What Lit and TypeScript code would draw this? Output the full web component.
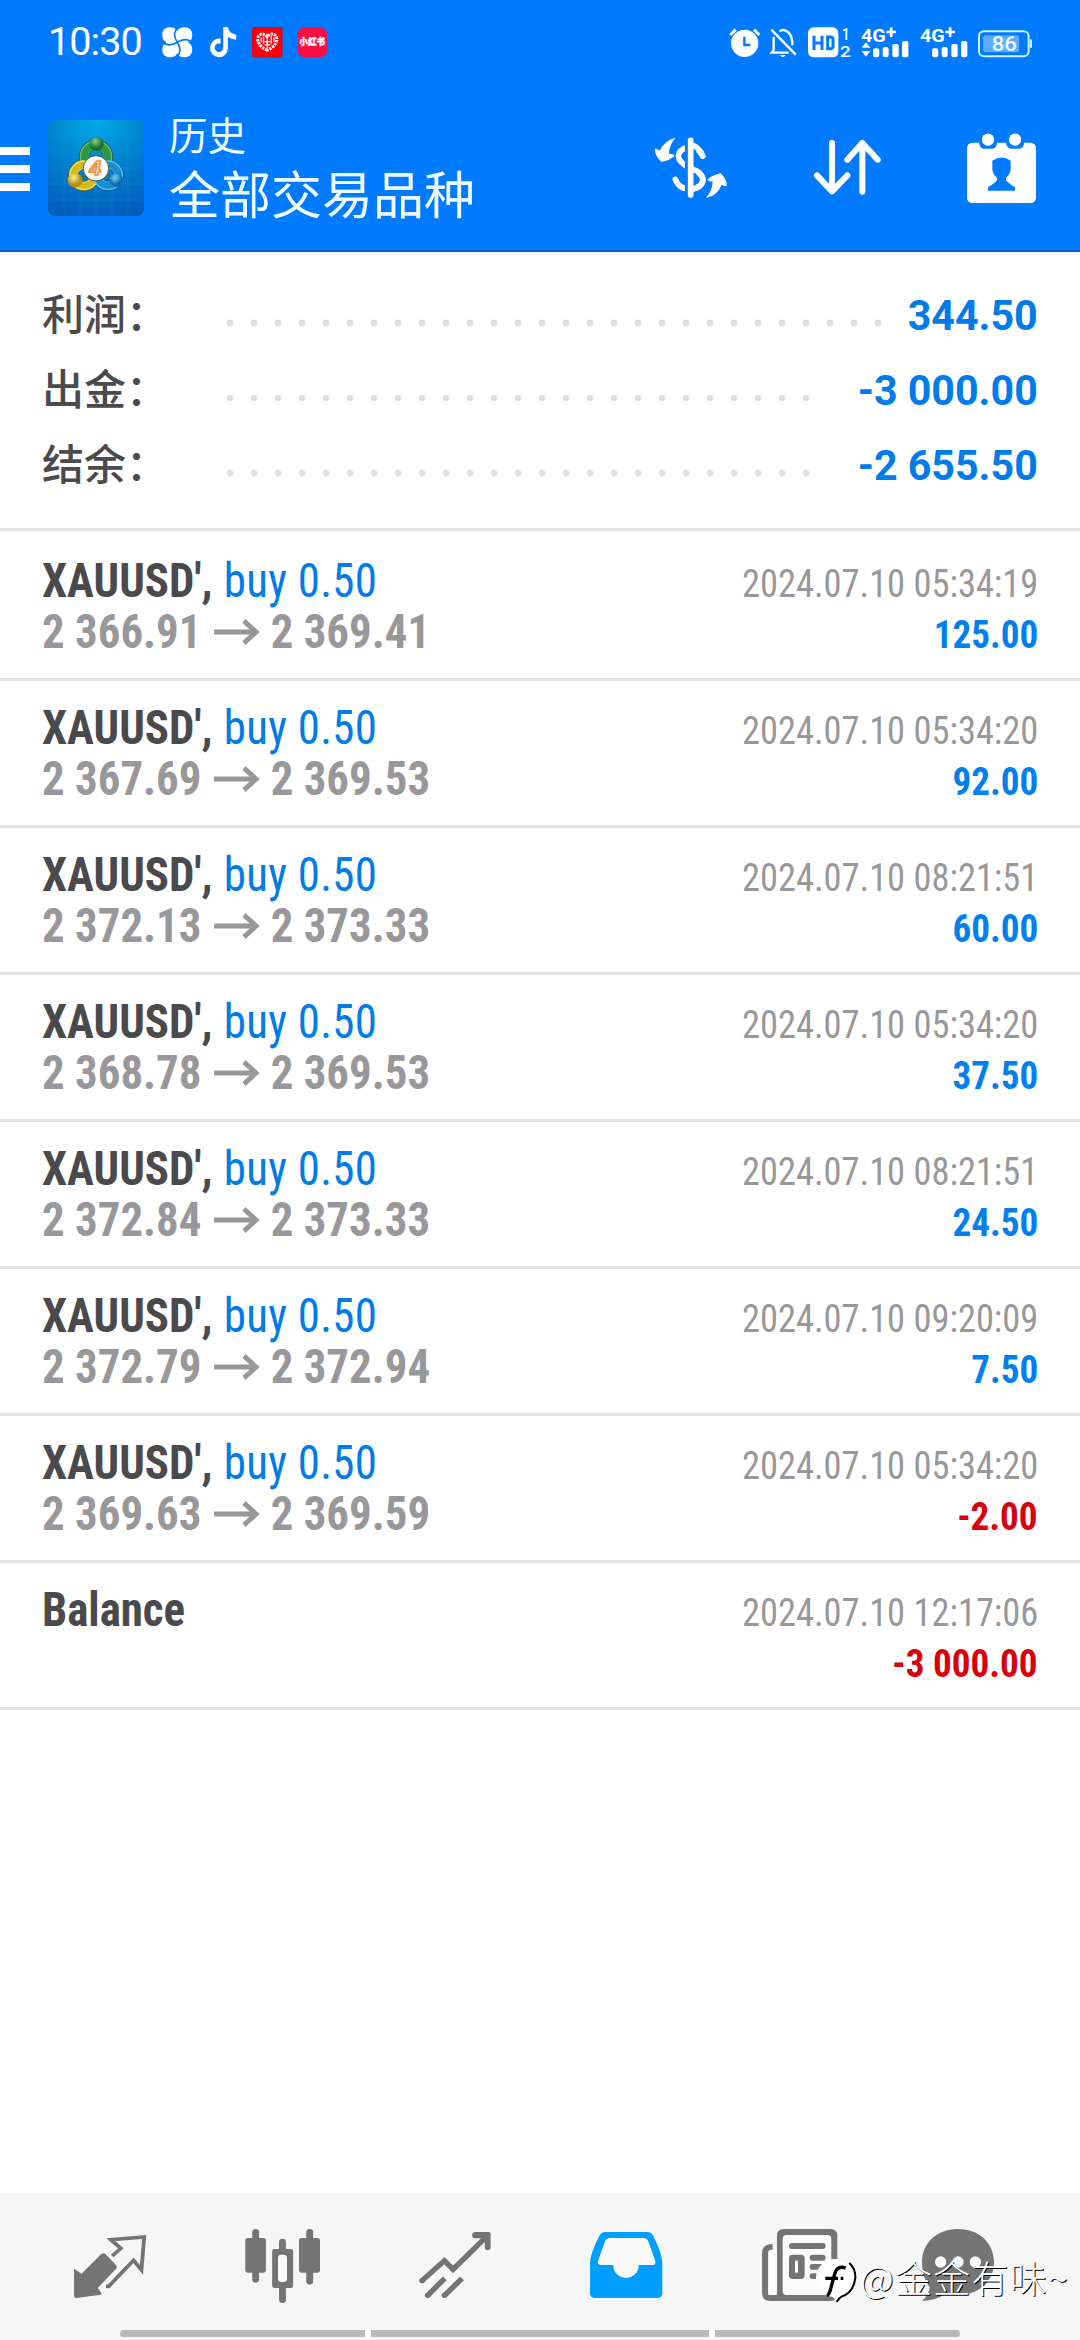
import { LitElement, html, css, svg } from "lit";
import { customElement, property } from "lit/decorators.js";

interface Deal {
  from: string;
  to: string;
  time: string;
  profit: string;
}

const DEALS: Deal[] = [
  { from: "2 366.91", to: "2 369.41", time: "2024.07.10 05:34:19", profit: "125.00" },
  { from: "2 367.69", to: "2 369.53", time: "2024.07.10 05:34:20", profit: "92.00" },
  { from: "2 372.13", to: "2 373.33", time: "2024.07.10 08:21:51", profit: "60.00" },
  { from: "2 368.78", to: "2 369.53", time: "2024.07.10 05:34:20", profit: "37.50" },
  { from: "2 372.84", to: "2 373.33", time: "2024.07.10 08:21:51", profit: "24.50" },
  { from: "2 372.79", to: "2 372.94", time: "2024.07.10 09:20:09", profit: "7.50" },
  { from: "2 369.63", to: "2 369.59", time: "2024.07.10 05:34:20", profit: "-2.00" },
];

const SUMMARY = [
  { label: "利润：", value: "344.50", dots: 28 },
  { label: "出金：", value: "-3 000.00", dots: 25 },
  { label: "结余：", value: "-2 655.50", dots: 25 },
];

/* Builds an icon of w by h pixels from a viewBox and its shapes. */
const icon = (w: number, h: number, viewBox: string, body: unknown) =>
  html`<svg class="icon" width=${w} height=${h} viewBox=${viewBox} preserveAspectRatio="none">${body}</svg>`;

@customElement("status-bar")
class StatusBar extends LitElement {
  static styles = css`
    :host { display: flex; align-items: flex-end; height: 57px; padding: 0 47.5px 0 48px; margin-bottom: 27px; color: #fff; }
    .icon { display: block; overflow: visible; }
    .time { width: 114px; font: 400 39.5px/28px Roboto, sans-serif; height: 29px; letter-spacing: -0.9px; white-space: nowrap; }
    .apps { display: flex; gap: 14px; }
    .apps .icon:nth-child(2) { margin: 0 2px 0 3px; }
    .system { display: flex; gap: 10.8px; margin-left: auto; }
    text { font-family: Roboto, sans-serif; }
    .cjk { font-family: "Noto Sans CJK SC", sans-serif; }
  `;

  render() {
    return html`
      <div class="time">10:30</div>
      <div class="apps">
        ${icon(30.5, 30.5, "0 0 92 92", svg`
          <g fill="#fff"><rect x="1" y="1" width="47" height="47" rx="21"/><rect x="44" y="1" width="47" height="47" rx="21"/>
          <rect x="1" y="44" width="47" height="47" rx="21"/><rect x="44" y="44" width="47" height="47" rx="21"/><rect x="24" y="14" width="44" height="64"/><rect x="14" y="24" width="64" height="44"/></g>
          <path d="M50 -2Q28 18 46 46Q64 74 42 94M-2 42Q18 64 46 46Q74 28 94 50" fill="none" stroke="#007bff" stroke-width="5"/>`)}
        ${icon(26.5, 30.5, "0 0 80 91", svg`<path fill="#fff" d="M40 0H54Q57 20 79 23V38Q64 37 54 30V62A27 28 0 1 1 32 35V50A13 13 0 1 0 40 62Z"/>`)}
        ${icon(30.5, 30.5, "0 0 92 92", svg`
          <rect width="92" height="92" rx="7" fill="#e40016"/><rect x="4" y="4" width="84" height="84" rx="3" fill="#f9000c"/>
          <path d="M46 70C25 62 14 44 18 32C22 18 38 18 46 30C54 18 70 18 74 32C78 44 67 62 46 70Z" fill="none" stroke="#fff" stroke-width="9" stroke-dasharray="7 3"/>
          <path d="M28 32V46M35 28V52M46 38V64M38 44H54M38 54H54M58 28V52M66 32V46" stroke="#fff" stroke-width="4"/>`)}
        ${icon(30.5, 30.5, "0 0 92 92", svg`
          <rect x="1" y="1" width="90" height="90" rx="22" fill="#ff0c42"/>
          <text class="cjk" x="46" y="55" font-size="26" font-weight="900" fill="#fff" stroke="#fff" stroke-width="1" text-anchor="middle">小红书</text>`)}
      </div>
      <div class="system">
        ${icon(29.7, 30.3, "28 50 89 91", svg`
          <circle cx="72" cy="99" r="41" fill="#fff"/><path d="M29 74L45 58M116 74L100 58" stroke="#fff" stroke-width="9"/>
          <path d="M71 79V104H89" fill="none" stroke="#007bff" stroke-width="7"/>`)}
        ${icon(26.7, 30.3, "148 50 80 91", svg`
          <path d="M152 58L225 133" stroke="#fff" stroke-width="7"/>
          <path d="M159 79V119L153 127H204M176 63Q190 54 203 66Q216 78 215 105" fill="none" stroke="#fff" stroke-width="7"/>
          <path d="M177 134H195Q186 146 177 134Z" fill="#fff"/>`)}
        ${icon(42.7, 30.3, "260 50 128 91", svg`
          <rect x="260" y="51" width="91" height="90" rx="17" fill="#fff"/>
          <path d="M278 76V119M302 76V119M278 98H302M319 80H328Q335 80 335 87V108Q335 115 328 115H319Z" fill="none" stroke="#007bff" stroke-width="9"/>
          <text x="361" y="88" font-size="48" font-weight="500" textLength="24" lengthAdjust="spacingAndGlyphs" fill="#fff">1</text>
          <text x="356" y="139" font-size="46" font-weight="500" textLength="32" lengthAdjust="spacingAndGlyphs" fill="#fff">2</text>`)}
        ${icon(47.7, 30.3, "422 50 143 91", svg`
          <text x="422" y="94" font-size="54" font-weight="700" textLength="74" lengthAdjust="spacingAndGlyphs" fill="#fff">4G</text>
          <path d="M498 65H527M512.500 51V80" stroke="#fff" stroke-width="8"/>
          <path d="M437 96L450 112H424ZM437 139L450 122H424Z" fill="#fff"/>
          <g fill="#fff"><rect x="458" y="114" width="19" height="27" rx="7"/><rect x="487" y="110" width="18" height="31" rx="7"/><rect x="516" y="101" width="19" height="40" rx="6"/><rect x="545" y="92" width="19" height="49" rx="6"/></g>`)}
        ${icon(47.7, 30.3, "602 50 143 91", svg`
          <text x="602" y="94" font-size="54" font-weight="700" textLength="74" lengthAdjust="spacingAndGlyphs" fill="#fff">4G</text>
          <path d="M678 65H707M692.500 51V80" stroke="#fff" stroke-width="8"/>
          <g fill="#fff"><rect x="638" y="114" width="19" height="27" rx="7"/><rect x="667" y="110" width="18" height="31" rx="7"/><rect x="696" y="101" width="19" height="40" rx="6"/><rect x="725" y="92" width="19" height="49" rx="6"/></g>`)}
        ${icon(54.3, 30.3, "774 50 163 91", svg`
          <rect x="777" y="63" width="149" height="75" rx="15" fill="none" stroke="#d5f2ff" stroke-width="6"/>
          <rect x="789" y="75" width="108" height="51" rx="6" fill="#59acff"/><rect x="930" y="87" width="6" height="26" rx="3" fill="#d5f2ff"/>
          <text x="853" y="122" font-size="60" font-weight="500" textLength="76" lengthAdjust="spacingAndGlyphs" text-anchor="middle" fill="#effaff">86</text>`)}
      </div>`;
  }
}

@customElement("title-bar")
class TitleBar extends LitElement {
  static styles = css`
    :host { display: flex; align-items: center; height: 166px; padding-right: 44px; color: #effcff; }
    .icon { display: block; overflow: visible; flex: none; }
    .menu { display: grid; gap: 10px; width: 30px; margin-top: 4px; }
    .line { height: 8px; background: #fff; }
    .logo { margin: 2px 25px 0 18px; }
    .titles { flex: 1; font-family: "Noto Sans CJK SC", sans-serif; font-weight: 400; padding-bottom: 2px; white-space: nowrap; }
    .small { font-size: 38.5px; line-height: 52px; }
    .large { font-size: 51px; line-height: 66px; }
    .actions { display: flex; align-items: center; gap: 86.5px; padding-top: 1px; }
    text { font-family: "Liberation Sans", sans-serif; }
  `;

  render() {
    return html`
      <div class="menu"><div class="line"></div><div class="line"></div><div class="line"></div></div>
      <div class="logo">
        ${icon(96, 96, "0 0 288 288", svg`
          <defs>
            <radialGradient id="bg" cx=".5" cy="0" r="1"><stop offset="0" stop-color="#00a9ea"/><stop offset=".45" stop-color="#0087d2"/><stop offset="1" stop-color="#005fbd"/></radialGradient>
            <radialGradient id="g" cx=".4" cy=".3"><stop offset="0" stop-color="#8fd08a"/><stop offset="1" stop-color="#17702f"/></radialGradient>
            <radialGradient id="y" cx=".4" cy=".3"><stop offset="0" stop-color="#fff08a"/><stop offset="1" stop-color="#b98f12"/></radialGradient>
            <radialGradient id="b" cx=".4" cy=".3"><stop offset="0" stop-color="#7cd0f5"/><stop offset="1" stop-color="#0b6cb4"/></radialGradient>
          </defs>
          <rect width="288" height="288" rx="20" fill="url(#bg)"/>
          <path d="M48 0V288M96 0V288M144 0V288M192 0V288M240 0V288M0 48H288M0 96H288M0 144H288M0 192H288M0 240H288" stroke="#3fb4ec" stroke-opacity=".22" stroke-width="2"/>
          <path d="M144 100L190 175H98Z" fill="#2c7a6a"/>
          <g fill="none">
            <circle cx="144" cy="110" r="36" stroke="#1d5a48" stroke-width="31"/>
            <circle cx="108" cy="166" r="32" stroke="#51632c" stroke-width="31"/>
            <circle cx="180" cy="166" r="32" stroke="#0b5790" stroke-width="31"/>
            <circle cx="144" cy="110" r="36" stroke="#6db96a" stroke-width="26"/>
            <circle cx="144" cy="110" r="35" stroke="#2c9647" stroke-width="20"/>
            <circle cx="108" cy="166" r="32" stroke="#f4e35c" stroke-width="26"/>
            <circle cx="108" cy="166" r="31" stroke="#d4b91c" stroke-width="19"/>
            <circle cx="180" cy="166" r="32" stroke="#5cc0ee" stroke-width="26"/>
            <circle cx="180" cy="166" r="31" stroke="#168ed1" stroke-width="20"/>
          </g>
          <circle cx="146" cy="72" r="21" fill="url(#g)"/><circle cx="81" cy="181" r="22" fill="url(#y)"/><circle cx="205" cy="181" r="20" fill="url(#b)"/>
          <circle cx="144" cy="145" r="38" fill="#fdfdfb" stroke="#3c6052" stroke-width="3"/>
          <text x="142" y="166" font-size="62" font-style="italic" font-weight="700" fill="#fff" stroke="#f5923f" stroke-width="5" text-anchor="middle">4</text>`)}
      </div>
      <div class="titles"><div class="small">历史</div><div class="large">全部交易品种</div></div>
      <div class="actions">
        ${icon(73.3, 61, "70 52 220 183", svg`
          <path d="M216 109Q202 80 172 82Q144 90 143 110Q145 130 180 146Q216 160 217 181Q214 205 180 209Q146 210 134 179" fill="none" stroke="#fff" stroke-width="17" stroke-linecap="round"/>
          <path d="M180 45V242" stroke="#007bff" stroke-width="34"/><path d="M188 78Q206 84 216 109M188 149Q217 160 217 181Q214 200 188 208" fill="none" stroke="#fff" stroke-width="17" stroke-linecap="round"/>
          <path d="M180 62V226" stroke="#fff" stroke-width="17" stroke-linecap="round"/>
          <path d="M135 54Q101 62 87 93Q78 86 72 88Q72 108 92 126Q113 125 132 109Q127 101 115 103Q115 75 135 54ZM226 235Q260 228 273 195Q282 202 288 198Q290 180 270 161Q247 165 230 180Q234 187 246 185Q246 212 226 235Z" fill="#fff"/>`)}
        ${icon(66.7, 54.7, "548 62 200 164", svg`<path d="M602 71V216M557 168L602 216L648 168M693 217V71M648 121L693 71L739 121" fill="none" stroke="#fff" stroke-width="18" stroke-linecap="round" stroke-linejoin="round"/>`)}
        ${icon(69, 70, "738 364 207 210", svg`
          <rect x="738" y="393" width="207" height="181" rx="16" fill="#fff"/>
          <path d="M774 384V393Q776 411 792 411H810Q828 411 828 393V384ZM855 384V393Q857 411 873 411H891Q909 411 909 393V384Z" fill="#007bff"/>
          <circle cx="801" cy="384" r="18.500" fill="#fff"/><circle cx="882" cy="384" r="18.500" fill="#fff"/>
          <path d="M801 537V527Q822 514 828 506V500Q816 488 814 475V447Q842 428 869 447V475Q867 488 855 500V506Q861 514 882 527V537Z" fill="#007bff"/>`)}
      </div>`;
  }
}

@customElement("deal-row")
class DealRow extends LitElement {
  @property({ attribute: false }) deal?: Deal;
  @property() time = "";
  @property() amount = "";

  static styles = css`
    :host { display: block; padding: 21px 42px; border-bottom: 3px solid #e3e3e3; font-family: "Roboto Condensed", Roboto, sans-serif; font-stretch: 75%; }
    .line { display: flex; justify-content: space-between; align-items: baseline; height: 51px; }
    .left { display: flex; align-items: baseline; font-size: 48px; line-height: 51px; transform: scaleX(0.935); transform-origin: left; white-space: pre; }
    .right { margin-left: auto; font-size: 39.5px; line-height: 45px; transform: scaleX(0.94); transform-origin: right; white-space: pre; }
    .symbol { font-weight: 700; color: #4a4a4d; }
    .side { color: #007be8; letter-spacing: 0.3px; margin-left: 1px; }
    .price { font-weight: 700; color: #98989a; }
    .arrow { display: block; margin: 0 12px 0 13px; align-self: center; }
    .time { color: #98989a; transform: scaleX(0.922); }
    .profit { font-weight: 700; color: #007ff0; }
    .single { padding-top: 6px; height: 45px; }
    .loss { color: #d8000c; }
  `;

  render() {
    const loss = this.amount.startsWith("-");
    return html`
      <div class="line">
        <div class="left">${this.deal
          ? html`<span class="symbol">XAUUSD', </span><span class="side">buy 0.50</span>`
          : html`<span class="symbol">Balance</span>`}</div>
        <div class="right time">${this.time}</div>
      </div>
      <div class="line ${this.deal ? "" : "single"}">
        ${this.deal
          ? html`<div class="left"><span class="price">${this.deal.from}</span><svg class="arrow" width="49" height="26" viewBox="0 0 49 26"><path d="M0 13H45M32 2L45 13L32 24" fill="none" stroke="#98989a" stroke-width="5"/></svg><span class="price">${this.deal.to}</span></div>`
          : null}
        <div class="right profit ${loss ? "loss" : ""}">${this.amount}</div>
      </div>`;
  }
}

@customElement("tab-bar")
class TabBar extends LitElement {
  static styles = css`
    :host { display: block; height: 147px; background: #f6f6f6; }
    .tabs { display: flex; gap: 99.300px; padding: 36px 0 0 74px; height: 101px; box-sizing: border-box; }
    .icon { display: block; flex: none; overflow: visible; }
    .icon:last-child { margin-left: -14.500px; }
    .nav { display: flex; gap: 6px; margin: 36px 120px 0; height: 7px; border-radius: 4px; overflow: hidden; background: #fff; }
    .seg { flex: 245; background: #b9b9b9; }
    .seg.mid { flex: 338; }
  `;

  render() {
    const c = "#747474";
    return html`
      <div class="tabs">
        ${icon(72.300, 74.300, "215 147 210 223", svg`
          <path d="M215 266L237 281L294 222Q300 217 306 222L337 255Q342 261 337 266L284 324L295 340L293 344L222 354Q215 354 215 347Z" fill="${c}"/>
          <path d="M326 228L351 205L322 179L419 171L411 270L388 241L316 319H308" fill="none" stroke="${c}" stroke-width="11"/>`)}
        ${icon(74.700, 74.300, "711 147 217 223", svg`
          <g fill="${c}"><rect x="709" y="174" width="60" height="104" rx="7"/><rect x="729" y="147" width="20" height="161" rx="10"/>
          <rect x="865" y="174" width="61" height="104" rx="7"/><rect x="886" y="147" width="20" height="167" rx="10"/>
          <rect x="787" y="207" width="61" height="117" rx="7"/><rect x="807" y="176" width="20" height="50" rx="10"/><rect x="807" y="310" width="20" height="59" rx="10"/></g>
          <rect x="804" y="224" width="26" height="82" rx="9" fill="#fbfbfb"/>`)}
        ${icon(71.300, 74.300, "1215 147 207 223", svg`
          <g fill="none" stroke="${c}" stroke-width="16"><path d="M1221 302L1286 242L1311 268L1408 170"/><path d="M1237 347L1287 295M1286 347L1337 295"/></g>
          <g fill="${c}"><circle cx="1221" cy="302" r="8"/><circle cx="1237" cy="346" r="8"/><circle cx="1286" cy="346" r="8"/><path d="M1376 156H1414Q1420 156 1420 162V202A8 8 0 0 1 1403 202V175H1376A9 9 0 0 1 1376 156Z"/></g>`)}
        ${icon(72.300, 74.300, "146 147 210 223", svg`
          <path d="M190 156H312Q324 156 330 168Q356 222 356 250V340Q356 354 342 354H160Q146 354 146 340V250Q146 222 173 168Q179 156 190 156Z" fill="#009fff"/>
          <path d="M205 174H300Q311 174 315 183L336 244Q337 255 328 255H287V263A37 37 0 0 1 214 263V255H176Q167 254 169 244L190 183Q194 174 205 174Z" fill="#fafafa"/>`)}
        ${icon(75.300, 74.300, "67 57 226 223", svg`
          <path d="M112 100V77Q112 57 132 57H273Q293 57 293 77V253Q293 273 273 273H92Q67 273 67 248V130Q67 102 99 102V119Q86 119 86 132V254H112Z" fill="${c}"/>
          <rect x="86" y="120" width="26" height="135" rx="6" fill="#fff"/><rect x="112" y="70" width="17" height="190" fill="${c}"/>
          <rect x="129" y="75" width="146" height="180" rx="12" fill="#fbfbfb"/>
          <g fill="${c}"><rect x="148" y="99" width="110" height="18" rx="9"/><rect x="148" y="134" width="47" height="73" rx="11"/><rect x="210" y="134" width="48" height="18" rx="9"/><rect x="210" y="162" width="48" height="17" rx="8"/><rect x="210" y="190" width="48" height="17" rx="8"/></g>
          <rect x="166" y="152" width="9" height="36" fill="#fbfbfb"/>`)}
        ${icon(72, 74.300, "547 57 216 223", svg`
          <path d="M655 57C718 57 763 99 763 156C763 215 718 255 655 255Q635 255 618 251Q590 271 547 273Q567 257 570 232Q547 202 547 156C547 99 592 57 655 57Z" fill="${c}"/>
          <g fill="#fafafa"><circle cx="603" cy="156" r="17"/><circle cx="655" cy="156" r="17"/><circle cx="707" cy="156" r="17"/></g>`)}
      </div>
      <div class="nav"><div class="seg"></div><div class="seg mid"></div><div class="seg"></div></div>`;
  }
}

@customElement("app-root")
class AppRoot extends LitElement {
  static styles = css`
    :host { display: flex; flex-direction: column; position: relative; width: 1080px; height: 2340px; overflow: hidden; background: #fff; }
    .header { background: #007bff; height: 250px; border-bottom: 2px solid #0865d2; }
    .summary { padding: 26px 42px 25px 42px; border-bottom: 3px solid #e3e3e3; }
    .sum { display: flex; align-items: baseline; height: 75px; font: 700 42px/75px Roboto, sans-serif; color: #007bea; white-space: pre; }
    .label { width: 176px; font: 500 42px/67px "Noto Sans CJK SC", sans-serif; color: #4a4a4d; }
    .dots { align-self: flex-start; height: 8px; margin-top: 41px; background: radial-gradient(circle, #e0e0e0 3.100px, transparent 3.900px) 0 0 / 24px 8px repeat-x; }
    .value { margin-left: auto; transform: scaleX(0.98); transform-origin: right; }
    .deals { flex: 1; padding-top: 3px; }
    .mark { position: absolute; left: 816px; top: 2257px; display: flex; color: #fff; }
    .mark-logo { display: block; flex: none; overflow: visible; }
    .mark-text { font: 300 37px/50px "Noto Sans CJK SC", sans-serif; letter-spacing: 1.300px; text-shadow: 1px 1px 0 #000; margin: -5px 0 0 4px; white-space: nowrap; }
  `;

  render() {
    return html`
      <div class="header"><status-bar></status-bar><title-bar></title-bar></div>
      <div class="summary">
        ${SUMMARY.map((s) => html`<div class="sum"><div class="label">${s.label}</div><div class="dots" style="width:${s.dots * 24}px"></div><div class="value">${s.value}</div></div>`)}
      </div>
      <div class="deals">
        ${DEALS.map((d) => html`<deal-row .deal=${d} time=${d.time} amount=${d.profit}></deal-row>`)}
        <deal-row time="2024.07.10 12:17:06" amount="-3 000.00"></deal-row>
      </div>
      <tab-bar></tab-bar>
      <div class="mark">
        <svg class="mark-logo" width="40" height="46" viewBox="228 145 120 138">
          <path d="M328 163Q347 180 346 208Q340 252 306 263Q296 268 290 280" fill="none" stroke="#000" stroke-width="6"/>
          <path d="M286 151C318 151 340 175 340 208C340 240 318 255 300 261Q290 266 286 278Q284 268 278 265C248 262 228 240 228 208C228 175 253 151 286 151Z" fill="#fff"/>
          <path d="M317 178Q291 169 284 196L270 248Q267 258 261 261M256 209H294M302 209H310" fill="none" stroke="#000" stroke-width="10"/>
        </svg>
        <div class="mark-text">@金金有味~</div>
      </div>`;
  }
}
